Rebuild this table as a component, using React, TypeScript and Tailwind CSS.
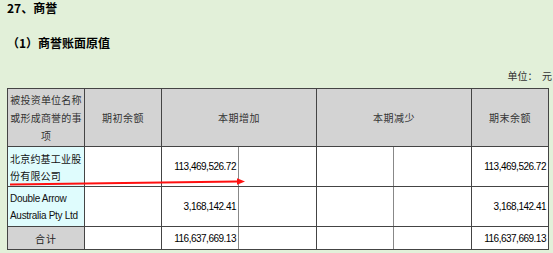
import React from 'react';

const cjk = { fontFamily: '"Noto Sans CJK SC", "Noto Sans", sans-serif' };
const num = { fontFamily: '"Liberation Sans", Arial, sans-serif' };

const rows = [
  { name: ['北京约基工业股', '份有限公司'], add: '113,469,526.72', end: '113,469,526.72', cjkName: true },
  { name: ['Double Arrow', 'Australia Pty Ltd'], add: '3,168,142.41', end: '3,168,142.41', cjkName: false },
];

const App = () => {
  return (
    <div className="relative w-[553px] h-[253px] overflow-hidden bg-[#e2f0d9] text-black">
      {/* Titles */}
      <div className="pl-[7px] h-[16px] leading-[16px] text-[12px] font-bold" style={cjk}>
        27、商誉
      </div>
      <div className="mt-[19px] pl-[7px] h-[16px] leading-[16px] text-[12px] font-bold" style={cjk}>
        （1）商誉账面原值
      </div>
      <div className="mt-[18px] flex justify-end pr-[1px] h-[14px] leading-[14px] text-[10px] text-[#333]" style={cjk}>
        单位：&nbsp;&nbsp;元
      </div>

      {/* Table */}
      <table className="mt-[5px] ml-[7px] w-[541px] table-fixed border-collapse text-[10px]">
        <colgroup>
          <col className="w-[77px]" />
          <col className="w-[77px]" />
          <col className="w-[77px]" />
          <col className="w-[78px]" />
          <col className="w-[77px]" />
          <col className="w-[78px]" />
          <col className="w-[77px]" />
        </colgroup>
        <thead>
          <tr className="h-[58px] bg-[#d3d3d3] text-[#333]" style={cjk}>
            <th className="border border-[#444] font-normal leading-[18px] tracking-[0.2px] whitespace-nowrap">
              被投资单位名称
              <br />
              或形成商誉的事
              <br />
              项
            </th>
            <th className="border border-[#444] font-normal tracking-[0.5px]">期初余额</th>
            <th colSpan={2} className="border border-[#444] font-normal tracking-[0.5px]">本期增加</th>
            <th colSpan={2} className="border border-[#444] font-normal tracking-[0.5px]">本期减少</th>
            <th className="border border-[#444] font-normal tracking-[0.5px]">期末余额</th>
          </tr>
        </thead>
        <tbody>
          {rows.map((r, i) => (
            <tr key={i} className="h-[40px] bg-white">
              <td
                className={`border border-[#444] bg-[#dffcfd] pl-[2px] leading-[17px] text-[10px] text-[#111] whitespace-nowrap ${
                  r.cjkName ? 'tracking-[0.2px]' : 'tracking-[-0.3px]'
                }`}
                style={r.cjkName ? cjk : num}
              >
                <div>{r.name[0]}</div>
                <div>{r.name[1]}</div>
              </td>
              <td className="border border-[#444]" />
              <td className="border border-[#444] border-r-[#888] text-right pr-[2px] tracking-[-0.5px]" style={num}>{r.add}</td>
              <td className="border border-[#444] border-l-[#888]" />
              <td className="border border-[#444] border-r-[#888]" />
              <td className="border border-[#444] border-l-[#888]" />
              <td className="border border-[#444] text-right pr-[2px] tracking-[-0.5px]" style={num}>{r.end}</td>
            </tr>
          ))}
          <tr className="h-[23px] bg-white">
            <td className="border border-[#444] bg-[#d3d3d3] text-center text-[#222] tracking-[1px]" style={cjk}>合计</td>
            <td className="border border-[#444]" />
            <td className="border border-[#444] border-r-[#888] text-right pr-[2px] tracking-[-0.5px]" style={num}>116,637,669.13</td>
            <td className="border border-[#444] border-l-[#888]" />
            <td className="border border-[#444] border-r-[#888]" />
            <td className="border border-[#444] border-l-[#888]" />
            <td className="border border-[#444] text-right pr-[2px] tracking-[-0.5px]" style={num}>116,637,669.13</td>
          </tr>
        </tbody>
      </table>

      {/* red annotation arrow */}
      <svg className="absolute left-0 top-0 pointer-events-none" width="553" height="253">
        <line x1="10" y1="184.5" x2="238" y2="181.5" stroke="#ff1010" strokeWidth="2" />
        <polygon points="245,181.4 237,178.2 237,184.8" fill="#ff1010" />
      </svg>
    </div>
  );
};

export default App;
